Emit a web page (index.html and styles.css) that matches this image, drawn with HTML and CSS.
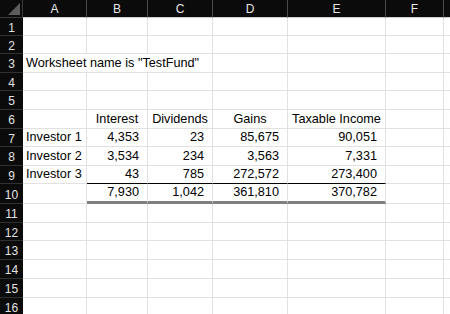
FILE: index.html
```html
<!DOCTYPE html>
<html>
<head>
<meta charset="utf-8">
<link rel="stylesheet" href="styles.css">
</head>
<body>
<div class="sheet">
  <div class="corner"><svg class="tri" width="12" height="12" viewBox="0 0 12 12"><polygon points="12,0 12,12 0,12" fill="#5c5c5c"/></svg></div>
  <div class="ch">A</div><div class="ch">B</div><div class="ch">C</div><div class="ch">D</div><div class="ch">E</div><div class="ch">F</div><div class="ch last"></div>

  <div class="rh">1</div><div class="c"></div><div class="c"></div><div class="c"></div><div class="c"></div><div class="c"></div><div class="c"></div><div class="c"></div>
  <div class="rh">2</div><div class="c"></div><div class="c"></div><div class="c"></div><div class="c"></div><div class="c"></div><div class="c"></div><div class="c"></div>
  <div class="rh">3</div><div class="c span3">Worksheet name is "TestFund"</div><div class="c"></div><div class="c"></div><div class="c"></div><div class="c"></div>
  <div class="rh">4</div><div class="c"></div><div class="c"></div><div class="c"></div><div class="c"></div><div class="c"></div><div class="c"></div><div class="c"></div>
  <div class="rh">5</div><div class="c"></div><div class="c"></div><div class="c"></div><div class="c"></div><div class="c"></div><div class="c"></div><div class="c"></div>
  <div class="rh">6</div><div class="c"></div><div class="c ctr">Interest</div><div class="c ctr">Dividends</div><div class="c ctr">Gains</div><div class="c ctr">Taxable Income</div><div class="c"></div><div class="c"></div>
  <div class="rh">7</div><div class="c">Investor 1</div><div class="c num">4,353</div><div class="c num">23</div><div class="c num">85,675</div><div class="c num">90,051</div><div class="c"></div><div class="c"></div>
  <div class="rh">8</div><div class="c">Investor 2</div><div class="c num">3,534</div><div class="c num">234</div><div class="c num">3,563</div><div class="c num">7,331</div><div class="c"></div><div class="c"></div>
  <div class="rh">9</div><div class="c">Investor 3</div><div class="c num top">43</div><div class="c num top">785</div><div class="c num top">272,572</div><div class="c num top">273,400</div><div class="c"></div><div class="c"></div>
  <div class="rh">10</div><div class="c"></div><div class="c num tot">7,930</div><div class="c num tot">1,042</div><div class="c num tot">361,810</div><div class="c num tot">370,782</div><div class="c"></div><div class="c"></div>
  <div class="rh">11</div><div class="c"></div><div class="c"></div><div class="c"></div><div class="c"></div><div class="c"></div><div class="c"></div><div class="c"></div>
  <div class="rh">12</div><div class="c"></div><div class="c"></div><div class="c"></div><div class="c"></div><div class="c"></div><div class="c"></div><div class="c"></div>
  <div class="rh">13</div><div class="c"></div><div class="c"></div><div class="c"></div><div class="c"></div><div class="c"></div><div class="c"></div><div class="c"></div>
  <div class="rh">14</div><div class="c"></div><div class="c"></div><div class="c"></div><div class="c"></div><div class="c"></div><div class="c"></div><div class="c"></div>
  <div class="rh">15</div><div class="c"></div><div class="c"></div><div class="c"></div><div class="c"></div><div class="c"></div><div class="c"></div><div class="c"></div>
  <div class="rh">16</div><div class="c"></div><div class="c"></div><div class="c"></div><div class="c"></div><div class="c"></div><div class="c"></div><div class="c"></div>
</div>
</body>
</html>
```
FILE: styles.css
```css
html, body {
  margin: 0;
  padding: 0;
  background: #ffffff;
  overflow: hidden;
}
.sheet {
  width: 450px;
  height: 314px;
  display: grid;
  grid-template-columns: 23px 64px 61px 65px 75px 98px 58px 1fr;
  grid-template-rows: 18px 18px 18px 19px 18px 19px 19px 18px 19px 18px 20px 19px 18px 19px 19px 19px 18px;
  font-family: "Liberation Sans", Arial, sans-serif;
  overflow: hidden;
}
.corner {
  background: #0b0b0b;
  border-right: 1px solid #3a3a3a;
  border-bottom: 1px solid #3a3a3a;
  box-sizing: border-box;
  position: relative;
}
.tri {
  position: absolute;
  right: 2px;
  bottom: 2px;
}
.ch {
  box-sizing: border-box;
  background: #0b0b0b;
  color: #e6e6e6;
  font-size: 12px;
  border-right: 1px solid #4a4a4a;
  border-bottom: 1px solid #cfcfcf;
  display: flex;
  align-items: center;
  justify-content: center;
  padding-top: 1px;
}
.ch.last {
  border-right: none;
}
.rh {
  box-sizing: border-box;
  background: #0b0b0b;
  color: #e2e2e2;
  font-size: 12px;
  border-bottom: 1px solid #303030;
  display: flex;
  align-items: center;
  justify-content: center;
  padding-top: 2px;
}
.c {
  box-sizing: border-box;
  border-right: 1px solid #e1e1e1;
  border-bottom: 1px solid #e1e1e1;
  font-size: 12.7px;
  line-height: 15px;
  color: #000;
  display: flex;
  align-items: flex-end;
  padding: 0 3px 1px 3px;
  white-space: nowrap;
}
.span3 {
  grid-column: span 3;
}
.ctr {
  justify-content: center;
  padding-left: 0;
  padding-right: 0;
}
.num {
  justify-content: flex-end;
  padding-right: 8px;
}
.top {
  border-bottom: 1px solid #000;
}
.tot {
  border-bottom: 3px solid #7f7f7f;
}
```
